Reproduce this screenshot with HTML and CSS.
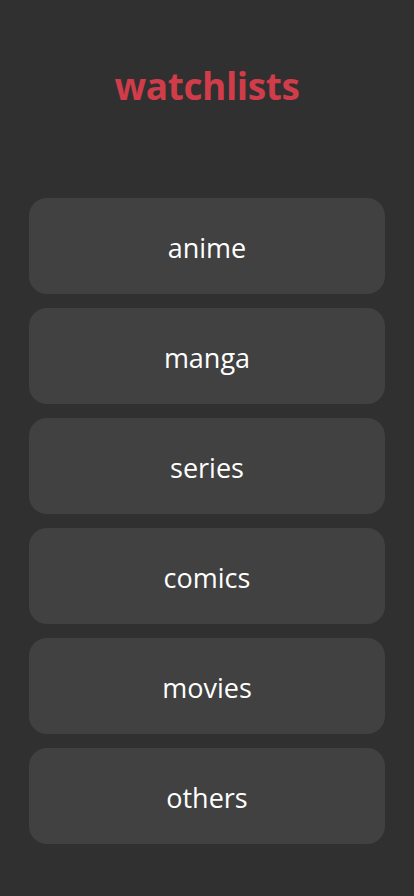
FILE: index.html
```html
<!DOCTYPE html>
<html>
<head>
<meta charset="utf-8">
<link rel="stylesheet" href="styles.css">
</head>
<body>
<div class="app">
  <header class="header"><h1 class="title">watchlists</h1></header>
  <nav class="lists">
    <a class="item">anime</a>
    <a class="item">manga</a>
    <a class="item">series</a>
    <a class="item">comics</a>
    <a class="item">movies</a>
    <a class="item">others</a>
  </nav>
</div>
</body>
</html>
```
FILE: styles.css
```css
html, body {
  margin: 0;
  padding: 0;
  background: #303030;
}
.app {
  width: 414px;
  min-height: 896px;
  font-family: "Open Sans", "Noto Sans", sans-serif;
}
.header {
  height: 198px;
  display: flex;
  justify-content: center;
  padding-top: 60px;
  box-sizing: border-box;
}
.title {
  margin: 0;
  color: #d03c4a;
  font-size: 37px;
  font-weight: 700;
  line-height: 52px;
  letter-spacing: -0.4px;
}
.lists {
  display: flex;
  flex-direction: column;
  gap: 14px;
  padding: 0 29px;
}
.item {
  height: 96px;
  border-radius: 18px;
  background: #414141;
  color: #ffffff;
  display: flex;
  align-items: center;
  justify-content: center;
  font-size: 27px;
  padding-top: 2px;
  box-sizing: border-box;
}
```
